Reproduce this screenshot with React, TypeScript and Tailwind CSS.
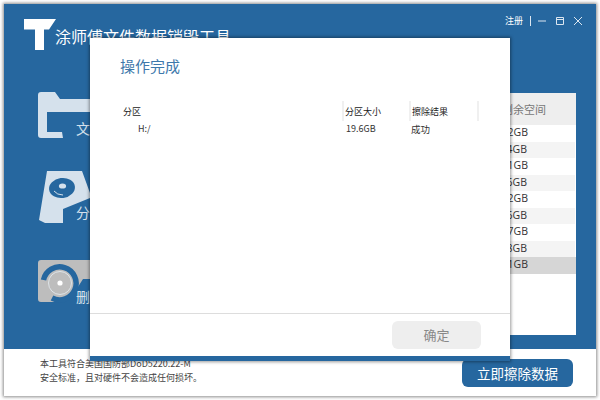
const cjk = "font-['Microsoft_YaHei','Noto_Sans_CJK_SC',sans-serif]";

function Logo() {
  return (
    <svg width="32" height="32" viewBox="0 0 32 32" className="shrink-0">
      <polygon points="0,0 32,0 25,10.5 20,10.5 20,31 11,31 11,10.5 0,10.5" fill="#ffffff" />
    </svg>
  );
}

function FolderIcon() {
  return (
    <svg width="52" height="48" viewBox="0 0 52 48" className="block shrink-0">
      <path d="M3 0H17L22 7H52V20H9V40H24L25 46H3Q0 46 0 43V3Q0 0 3 0Z" fill="#d5e1ec" />
    </svg>
  );
}

function DiskIcon() {
  return (
    <svg width="51" height="54" viewBox="0 0 51 54" className="block shrink-0">
      <polygon points="8,0 43,0 51,22 51,27 24,38 24,52 6,52 0,49" fill="#d5e1ec" />
      <ellipse cx="23" cy="17" rx="13" ry="10" transform="rotate(-8 23 17)" fill="#26679f" />
      <ellipse cx="23.5" cy="15" rx="3.6" ry="2.6" fill="#d5e1ec" />
      <path d="M15 20Q18 24 24 24" stroke="#d5e1ec" strokeWidth="1" fill="none" />
    </svg>
  );
}

function EraseIcon() {
  return (
    <svg width="52" height="44" viewBox="0 0 52 44" className="block shrink-0">
      <path d="M3 0H52V19H45L38 30L25 42H3Q0 42 0 39V3Q0 0 3 0Z" fill="#bdbdbd" />
      <path d="M5.5 20A16.5 16.5 0 1 1 14 38" fill="none" stroke="#26679f" strokeWidth="5.5" />
      <circle cx="22" cy="23" r="11.5" fill="none" stroke="#e6edf3" strokeWidth="0.8" />
      <circle cx="22" cy="23" r="2.6" fill="#ffffff" />
    </svg>
  );
}

const rows = ["12.2GB", "33.4GB", "20.1GB", "45.6GB", "12.2GB", "18.6GB", "30.7GB", "25.8GB", "19.1GB"];

function NavItem({
  icon,
  label,
  className,
  labelClass,
}: {
  icon: React.ReactNode;
  label: string;
  className: string;
  labelClass: string;
}) {
  return (
    <div className={`relative ${className}`}>
      {icon}
      <span className={`absolute text-[14px] leading-[18px] text-[#d5e1ec] whitespace-nowrap ${labelClass}`}>{label}</span>
    </div>
  );
}

export default function App() {
  return (
    <div className={`relative h-[400px] w-[600px] overflow-hidden bg-white p-[4px] ${cjk}`}>
      <div className="flex h-[392px] w-[592px] flex-col bg-white shadow-[0_0_3px_1px_rgba(0,0,0,0.45)]">
        <div className="flex h-[345px] shrink-0 flex-col bg-[#26679f]">
          <header className="flex h-[50px] shrink-0 items-start pl-[20px] pr-[13px] pt-[15px]">
            <Logo />
            <span className="ml-[-1px] mt-[5px] text-[16px] leading-[24px] text-white">涂师傅文件数据销毁工具</span>
            <div className="ml-auto flex h-[10px] -translate-y-[3px] items-center text-[#dbe6f0]">
              <span className="text-[9px] leading-[10px] text-white">注册</span>
              <span className="ml-[7px] h-[10px] w-px bg-[#dbe6f0]" />
              <svg width="10" height="10" viewBox="0 0 10 10" className="ml-[6px]"><path d="M1 5H9" stroke="#dbe6f0" strokeWidth="1" /></svg>
              <svg width="10" height="10" viewBox="0 0 10 10" className="ml-[8px]" fill="none"><path d="M1.5 1.5H8.5V8.5H1.5ZM1.5 3.5H8.5" stroke="#dbe6f0" strokeWidth="1" /></svg>
              <svg width="10" height="10" viewBox="0 0 10 10" className="ml-[8px]" fill="none"><path d="M1 1L9 9M9 1L1 9" stroke="#dbe6f0" strokeWidth="1" /></svg>
            </div>
          </header>
          <div className="flex min-h-0 flex-1">
            <nav className="flex w-[100px] shrink-0 flex-col pt-[38px]">
              <NavItem className="ml-[34px]" icon={<FolderIcon />} label="文件擦除" labelClass="left-[38px] bottom-[3px]" />
              <NavItem className="ml-[35px] mt-[31px]" icon={<DiskIcon />} label="分区擦除" labelClass="left-[37px] bottom-[4px]" />
              <NavItem className="ml-[34px] mt-[35px]" icon={<EraseIcon />} label="删除文件" labelClass="left-[38px] bottom-[-1px]" />
            </nav>
            <main className="ml-auto mb-[14px] mr-[20px] mt-[39px] flex w-[200px] flex-col bg-white">
              <div className="flex h-[32px] shrink-0 items-center justify-end bg-[#eeeeee] pr-[30px] text-[11px] text-[#777777]">剩余空间</div>
              {rows.map((r, i) => (
                <div
                  key={i}
                  className={`flex h-[16.5px] items-center justify-end pr-[48px] font-['Open_Sans','Noto_Sans_CJK_SC',sans-serif] text-[10.5px] text-[#333333] ${
                    i === 8 ? "bg-[#d6d6d6]" : i % 2 ? "mr-[1px] bg-[#f4f4f4]" : ""
                  }`}
                >
                  {r}
                </div>
              ))}
            </main>
          </div>
        </div>
        <footer className="flex min-h-0 flex-1 items-start pl-[36px] pr-[23px] pt-[8px]">
          <p className="text-[9px] leading-[14px] text-[#444444]">
            本工具符合美国国防部DoD5220.22-M
            <br />
            安全标准，且对硬件不会造成任何损坏。
          </p>
          <button className="ml-auto mt-[2px] h-[28px] w-[111px] rounded-[6px] bg-[#26679f] text-[13.5px] text-white">立即擦除数据</button>
        </footer>
      </div>

      <div className="absolute left-[90px] top-[38px] flex h-[323px] w-[420px] flex-col border-b-[5px] border-[#26679f] bg-white shadow-[0_0_3px_1px_rgba(0,0,0,0.4)]">
        <h1 className="ml-[30px] mt-[19px] text-[15px] leading-[18px] text-[#3e78ab]">操作完成</h1>
        <div className="ml-[33px] mt-[26px] flex h-[20px] text-[9px] leading-[22px] text-[#222222]">
          <div className="w-[219px]">分区</div>
          <div className="w-[67px] border-l-2 border-[#f0f0f0] pl-[1px]">分区大小</div>
          <div className="w-[70px] border-x-2 border-[#f0f0f0] pl-[1px]">擦除结果</div>
        </div>
        <div className="ml-[48px] flex h-[16px] text-[9px] leading-[16px] text-[#333333]">
          <div className="w-[208px]">H:/</div>
          <div className="w-[65px]">19.6GB</div>
          <div className="text-[9.5px]">成功</div>
        </div>
        <div className="mt-auto flex h-[43px] shrink-0 items-center justify-end border-t border-[#dddddd] pr-[29px]">
          <button className="h-[28px] w-[89px] rounded-[6px] bg-[#eeeeee] text-[13px] text-[#888888]">确定</button>
        </div>
      </div>
    </div>
  );
}
